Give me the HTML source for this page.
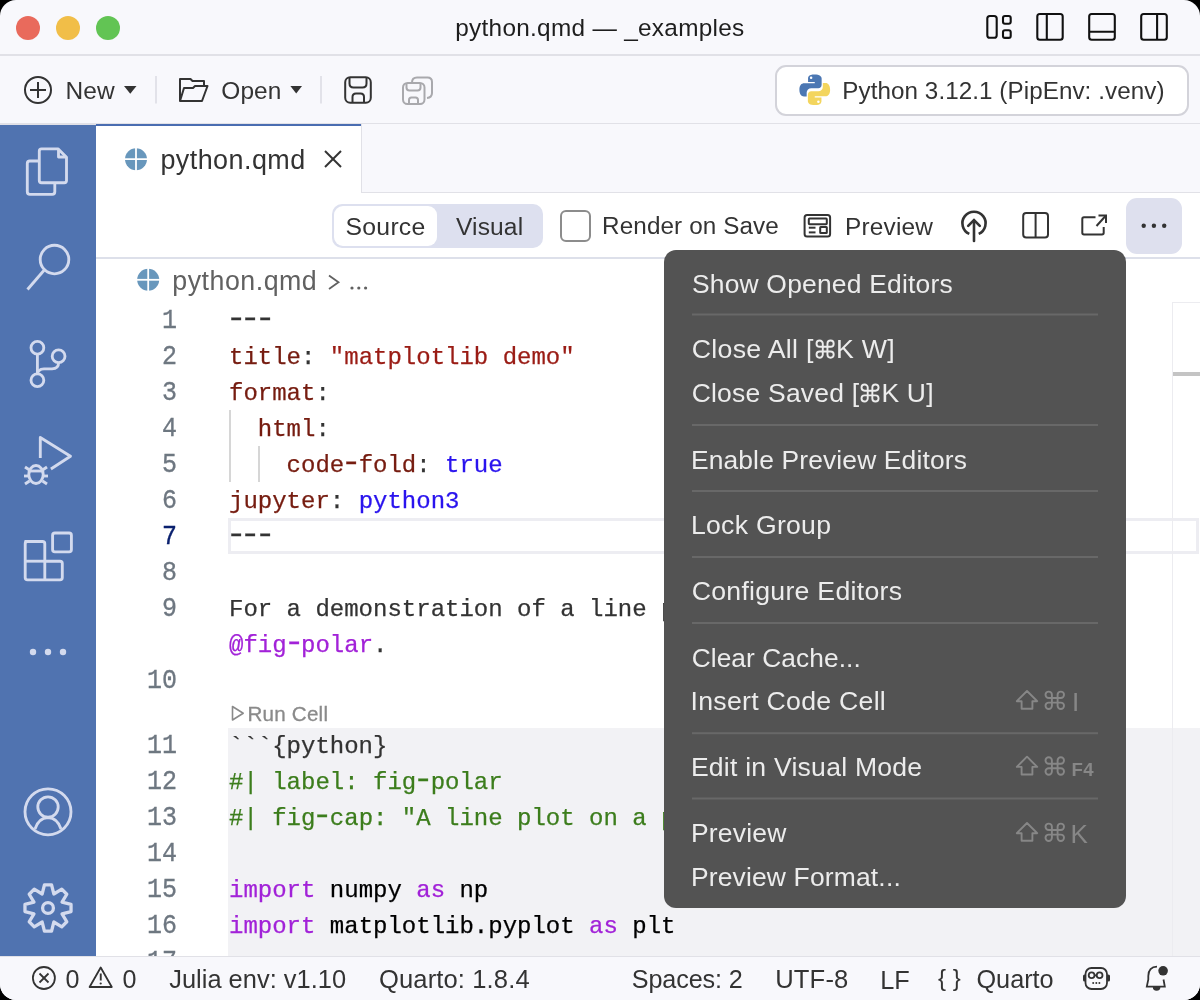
<!DOCTYPE html>
<html><head><meta charset="utf-8">
<style>
*{box-sizing:border-box;margin:0;padding:0}
html,body{width:1200px;height:1000px;overflow:hidden;background:#000}
body{font-family:"Liberation Sans",sans-serif;color:#333}
#win{will-change:transform;position:absolute;left:0;top:0;width:1200px;height:1000px;border-radius:16px;overflow:hidden;background:#f8f8fc}
.abs{position:absolute}
.t{position:absolute;white-space:pre;line-height:1}
svg{position:absolute;overflow:visible}
.code{font-family:"Liberation Mono",monospace;font-size:24px;line-height:36px;white-space:pre;position:absolute;transform:translateY(1.5px);-webkit-text-stroke:0.25px currentColor}
.ln{position:absolute;font-family:"Liberation Mono",monospace;font-size:25px;line-height:36px;color:#6e7781;text-align:right;width:60px;left:117px;transform:translateY(1px) scaleY(1.09);-webkit-text-stroke:0.3px currentColor}
.mi{position:absolute;left:28px;font-size:26px;color:#ececec;white-space:pre;line-height:1}
.sep{position:absolute;left:28px;width:406px;height:2px;background:#686868}
.hy{font-style:normal;display:inline-block;transform:translateY(-1.8px) scale(1.45,1.25)}
.sc{position:absolute;font-size:24px;color:#8c8c8c;white-space:pre;line-height:1}
</style></head>
<body>
<div id="win">
  <!-- ============ backgrounds ============ -->
  <div class="abs" style="left:0;top:54px;width:1200px;height:1.5px;background:#e1e1e7"></div>
  <div class="abs" style="left:0;top:123px;width:1200px;height:1.5px;background:#e1e1e7"></div>
  <div class="abs" style="left:0;top:124.5px;width:96px;height:831px;background:#5073b0"></div>
  <div class="abs" style="left:96px;top:124.5px;width:1104px;height:831px;background:#fff"></div>
  <div class="abs" style="left:361px;top:124px;width:839px;height:69px;background:#f8f8fc;border-left:1.5px solid #e1e1e7;border-bottom:1.5px solid #e1e1e7"></div>
  <div class="abs" style="left:96px;top:124px;width:265px;height:2px;background:#4a6db1"></div>
  <div class="abs" style="left:96px;top:257px;width:1104px;height:1.5px;background:#dde0ea"></div>

  <!-- ============ title bar ============ -->
  <div class="abs" style="left:16px;top:16px;width:24px;height:24px;border-radius:50%;background:#e96a5c"></div>
  <div class="abs" style="left:56px;top:16px;width:24px;height:24px;border-radius:50%;background:#f1be48"></div>
  <div class="abs" style="left:96px;top:16px;width:24px;height:24px;border-radius:50%;background:#62c454"></div>
  <svg style="left:0;top:0" width="1200" height="55">
    <g fill="none" stroke="#111" stroke-width="2.1">
      <rect x="987.3" y="16" width="9.4" height="21.8" rx="2.6"/>
      <rect x="1003" y="16" width="7.7" height="7.7" rx="2"/>
      <rect x="1003" y="30.2" width="7.7" height="7.7" rx="2"/>
      <rect x="1037.3" y="14" width="25.4" height="25.8" rx="2.5"/>
      <line x1="1046.8" y1="14" x2="1046.8" y2="40"/>
      <rect x="1089.2" y="14" width="25.6" height="25.8" rx="2.5"/>
      <line x1="1089" y1="31.8" x2="1115" y2="31.8"/>
      <rect x="1141.2" y="14" width="25.6" height="25.8" rx="2.5"/>
      <line x1="1157.1" y1="14" x2="1157.1" y2="40"/>
    </g>
  </svg>

  <!-- ============ toolbar ============ -->
  <svg style="left:0;top:0" width="1200" height="124">
    <g fill="none" stroke="#333" stroke-width="2">
      <circle cx="38" cy="90" r="13"/>
      <line x1="30" y1="90" x2="46" y2="90"/>
      <line x1="38" y1="82" x2="38" y2="98"/>
      <path d="M180 101 V79 H190.5 L192.5 81 H204 V86.5" stroke-linejoin="round"/>
      <path d="M180 101 L184 88 H193 L195 86 H207.5 L202 101 Z" stroke-linejoin="round"/>
      <rect x="345.2" y="77.2" width="25.6" height="25.6" rx="5"/>
      <path d="M349.5 77.5 V83.5 Q349.5 87.5 353.5 87.5 H362.5 Q366.5 87.5 366.5 83.5 V77.5"/>
      <path d="M352.5 102.5 V97 Q352.5 93.5 356 93.5 H360.5 Q364 93.5 364 97 V102.5"/>
    </g>
    <g fill="none" stroke="#a9a9ad" stroke-width="2">
      <rect x="403" y="83" width="21.5" height="21" rx="4.5"/>
      <path d="M406.5 83.5 V87.5 Q406.5 90.5 409.5 90.5 H417.5 Q420.5 90.5 420.5 87.5 V83.5"/>
      <path d="M409 104 V100 Q409 97.5 411.5 97.5 H415.5 Q418 97.5 418 100 V104"/>
      <path d="M412 82.5 Q412 77.5 417 77.5 H427.5 Q432 77.5 432 82 V93 Q432 97.5 427 98"/>
    </g>
    <path d="M124 86 H136.5 L130.25 93.8 Z" fill="#333"/>
    <path d="M290.4 86 H302 L296.2 93.4 Z" fill="#333"/>
    <line x1="156" y1="76" x2="156" y2="103.5" stroke="#dcdce4" stroke-width="1.6"/>
    <line x1="321" y1="76" x2="321" y2="103.5" stroke="#dcdce4" stroke-width="1.6"/>
  </svg>
  <div class="abs" style="left:774.5px;top:64.5px;width:414px;height:51px;border:2px solid #d3d3da;border-radius:11px;background:#fff"></div>
  <svg style="left:798.5px;top:74px" width="31.5" height="31.5" viewBox="0 0 32 32">
    <path d="M15.6 0.4C9.8 0.4 9.2 2.9 9.2 4.6V8.2H16V9.4H5.2C2.6 9.4 0.4 11.4 0.4 15.8C0.4 20.6 2.4 22.8 5 22.8H7.8V18.8C7.8 16.4 9.8 14.4 12.4 14.4H19.6C21.6 14.4 23 12.8 23 10.8V4.6C23 2.4 21.2 0.4 15.6 0.4Z" fill="#4b77b3"/>
    <circle cx="12.3" cy="3.9" r="1.3" fill="#fff"/>
    <g transform="rotate(180 16 16)">
      <path d="M15.6 0.4C9.8 0.4 9.2 2.9 9.2 4.6V8.2H16V9.4H5.2C2.6 9.4 0.4 11.4 0.4 15.8C0.4 20.6 2.4 22.8 5 22.8H7.8V18.8C7.8 16.4 9.8 14.4 12.4 14.4H19.6C21.6 14.4 23 12.8 23 10.8V4.6C23 2.4 21.2 0.4 15.6 0.4Z" fill="#f3d55e"/>
      <circle cx="12.3" cy="3.9" r="1.3" fill="#fff"/>
    </g>
  </svg>

  <svg style="left:0;top:0" width="96" height="1000">
    <g fill="none" stroke="#d3daee" stroke-width="2.85" stroke-linejoin="round">
      <path d="M38.5 161 H29.8 Q27.3 161 27.3 163.5 V191.8 Q27.3 194.3 29.8 194.3 H52.3 Q54.8 194.3 54.8 191.8 V183"/>
      <path d="M41.5 148.8 H58 L66.5 157.3 V180.5 Q66.5 182.7 64.3 182.7 H41.5 Q39.3 182.7 39.3 180.5 V151 Q39.3 148.8 41.5 148.8 Z"/>
      <path d="M58.5 149.5 V157 H66" />
      <circle cx="54.5" cy="259.5" r="14.3"/>
      <line x1="44.3" y1="270" x2="27.5" y2="289.5"/>
      <circle cx="37.4" cy="347.8" r="6.4"/>
      <circle cx="37.4" cy="380.3" r="6.4"/>
      <circle cx="58.6" cy="356.3" r="6.4"/>
      <line x1="37.4" y1="354.2" x2="37.4" y2="373.9"/>
      <path d="M58.6 362.7 Q58.6 368.5 52 368.8 H44 Q37.6 369 37.4 374.5"/>
      <path d="M40.3 458 V437.5 L70.5 456.2 L50.9 469"/>
      <ellipse cx="36" cy="474.5" rx="7.2" ry="9"/>
      <line x1="28.8" y1="471" x2="43.2" y2="471"/>
      <line x1="24" y1="476" x2="29" y2="476"/>
      <line x1="43" y1="476" x2="48" y2="476"/>
      <line x1="25" y1="467" x2="29.5" y2="470"/>
      <line x1="47" y1="467" x2="42.5" y2="470"/>
      <line x1="25" y1="484" x2="29.5" y2="481"/>
      <line x1="47" y1="484" x2="42.5" y2="481"/>
      <path d="M25.5 541.5 H42.5 Q44.8 541.5 44.8 543.8 V561.2 H60 Q62.3 561.2 62.3 563.5 V577.5 Q62.3 579.8 60 579.8 H27.5 Q25.2 579.8 25.2 577.5 V543.8 Q25.2 541.5 27.5 541.5 Z"/>
      <line x1="25.2" y1="561.2" x2="44.8" y2="561.2"/>
      <line x1="44.8" y1="561.2" x2="44.8" y2="579.8"/>
      <rect x="52.6" y="533" width="18.8" height="18.8" rx="2.3"/>
      <circle cx="48" cy="811.8" r="23"/>
      <circle cx="48" cy="807" r="10.2"/>
      <path d="M35 829 Q38.5 818 48 817.5 Q57.5 818 61 829"/>
      <path d="M44.44 884.97 L51.56 884.97 L53.82 893.96 L61.77 889.20 L66.80 894.23 L62.04 902.18 L71.03 904.44 L71.03 911.56 L62.04 913.82 L66.80 921.77 L61.77 926.80 L53.82 922.04 L51.56 931.03 L44.44 931.03 L42.18 922.04 L34.23 926.80 L29.20 921.77 L33.96 913.82 L24.97 911.56 L24.97 904.44 L33.96 902.18 L29.20 894.23 L34.23 889.20 L42.18 893.96Z" stroke-width="3.3"/>
      <circle cx="48" cy="908" r="5.4" stroke-width="3.3"/>
    </g>
    <g fill="#d3daee">
      
      <circle cx="33" cy="652" r="3.2"/>
      <circle cx="48" cy="652" r="3.2"/>
      <circle cx="63" cy="652" r="3.2"/>
    </g>
  </svg>
  <svg style="left:0;top:0" width="1200" height="300">
    <g>
      <circle cx="136" cy="159.2" r="11" fill="#6897bc"/>
      <line x1="136" y1="147" x2="136" y2="171.5" stroke="#fff" stroke-width="1.8"/>
      <line x1="124" y1="159.2" x2="148.5" y2="159.2" stroke="#fff" stroke-width="1.8"/>
      <circle cx="148.2" cy="279.8" r="11" fill="#6897bc"/>
      <line x1="148.2" y1="267.5" x2="148.2" y2="292" stroke="#fff" stroke-width="1.8"/>
      <line x1="136" y1="279.8" x2="160.5" y2="279.8" stroke="#fff" stroke-width="1.8"/>
    </g>
    <g fill="none" stroke="#333" stroke-width="2">
      <line x1="325" y1="151" x2="341" y2="167"/>
      <line x1="341" y1="151" x2="325" y2="167"/>
    </g>
    <path d="M329 275.5 L338.5 282.3 L329 289" fill="none" stroke="#616161" stroke-width="1.8"/>
    <g fill="#616161"><circle cx="352" cy="288" r="1.6"/><circle cx="358.8" cy="288" r="1.6"/><circle cx="365.6" cy="288" r="1.6"/></g>
    <!-- editor toolbar icons -->
    <g fill="none" stroke="#333" stroke-width="2">
      <rect x="804.6" y="214.9" width="25.5" height="21.6" rx="2.5"/>
      <rect x="808.8" y="218.6" width="18" height="5.6" rx="0.8"/>
      <line x1="808.8" y1="227.7" x2="815.5" y2="227.7"/>
      <line x1="808.8" y1="232.4" x2="815.5" y2="232.4"/>
      <rect x="820.2" y="227" width="6.6" height="6" rx="0.5"/>
      <path d="M969.3 233.9 A11.6 11.6 0 1 1 978.7 233.9" stroke-width="2.6"/>
      <line x1="974" y1="220.5" x2="974" y2="241" stroke-width="2.6" stroke-linecap="round"/>
      <path d="M968.2 225.8 L974 220 L979.8 225.8" stroke-width="2.6" stroke-linecap="round"/>
      <rect x="1023.2" y="213" width="24.8" height="24.5" rx="3"/>
      <line x1="1035.6" y1="213" x2="1035.6" y2="237.5"/>
      <path d="M1095.5 217.3 H1084 Q1082.3 217.3 1082.3 219 V232.8 Q1082.3 234.5 1084 234.5 H1102 Q1103.7 234.5 1103.7 232.8 V227"/>
      <line x1="1096.5" y1="226" x2="1105.5" y2="216"/>
      <path d="M1098.5 215.5 H1106 V223"/>
    </g>
    <g fill="#333"><circle cx="1143.7" cy="225.8" r="2.2"/><circle cx="1153.9" cy="225.8" r="2.2"/><circle cx="1164.2" cy="225.8" r="2.2"/></g>
  </svg>
  <div class="abs" style="left:332.4px;top:204px;width:210.6px;height:43.5px;border-radius:10px;background:#dde0ef"></div>
  <div class="abs" style="left:334px;top:206px;width:103px;height:40px;border-radius:9px;background:#fff"></div>
  <div class="abs" style="left:559.5px;top:210px;width:31.5px;height:32px;border-radius:6px;border:2px solid #8c8c8c;background:#fff"></div>
  <div class="abs" style="left:1126.2px;top:198px;width:55.5px;height:55.7px;border-radius:11px;background:#dee0ee"></div>
  <svg style="left:0;top:0" width="1200" height="260">
    <g fill="#333"><circle cx="1143.7" cy="225.8" r="2.2"/><circle cx="1153.9" cy="225.8" r="2.2"/><circle cx="1164.2" cy="225.8" r="2.2"/></g>
  </svg>
  <div class="abs" style="left:228px;top:728px;width:972px;height:228px;background:#f2f2f5"></div>
  <div class="abs" style="left:228px;top:518px;width:971px;height:36px;border:3.5px solid #ededf2"></div>
  <div class="abs" style="left:1172px;top:302px;width:28px;height:654px;border-left:1.5px solid #ececf0;border-top:1.5px solid #ececf0"></div>
  <div class="abs" style="left:1173px;top:372px;width:27px;height:4px;background:#c4c4c4"></div>
  <div class="abs" style="left:229px;top:410px;width:2px;height:72px;background:#d6d6d6"></div>
  <div class="abs" style="left:258px;top:446px;width:2px;height:36px;background:#d6d6d6"></div>
  <div class="ln" style="top:302px">1</div>
  <div class="ln" style="top:338px">2</div>
  <div class="ln" style="top:374px">3</div>
  <div class="ln" style="top:410px">4</div>
  <div class="ln" style="top:446px">5</div>
  <div class="ln" style="top:482px">6</div>
  <div class="ln" style="top:518px;color:#0b216f">7</div>
  <div class="ln" style="top:554px">8</div>
  <div class="ln" style="top:590px">9</div>
  <div class="ln" style="top:662px">10</div>
  <div class="ln" style="top:727px">11</div>
  <div class="ln" style="top:763px">12</div>
  <div class="ln" style="top:799px">13</div>
  <div class="ln" style="top:835px">14</div>
  <div class="ln" style="top:871px">15</div>
  <div class="ln" style="top:907px">16</div>
  <div class="ln" style="top:943px">17</div>
  <div class="code" style="left:229px;top:302px;color:#333"><i class="hy">-</i><i class="hy">-</i><i class="hy">-</i></div>
  <div class="code" style="left:229px;top:338px"><span style="color:#761c10">title</span><span style="color:#333">: </span><span style="color:#9a1c15">"matplotlib demo"</span></div>
  <div class="code" style="left:229px;top:374px"><span style="color:#761c10">format</span><span style="color:#333">:</span></div>
  <div class="code" style="left:229px;top:410px"><span style="color:#761c10">  html</span><span style="color:#333">:</span></div>
  <div class="code" style="left:229px;top:446px"><span style="color:#761c10">    code<i class="hy">-</i>fold</span><span style="color:#333">: </span><span style="color:#2a14ee">true</span></div>
  <div class="code" style="left:229px;top:482px"><span style="color:#761c10">jupyter</span><span style="color:#333">: </span><span style="color:#2a14ee">python3</span></div>
  <div class="code" style="left:229px;top:518px;color:#333"><i class="hy">-</i><i class="hy">-</i><i class="hy">-</i></div>
  <div class="code" style="left:229px;top:590px;color:#333">For a demonstration of a line plot on a polar axis, see</div>
  <div class="code" style="left:229px;top:626px"><span style="color:#a222d8">@fig<i class="hy">-</i>polar</span><span style="color:#333">.</span></div>
  <svg style="left:0;top:0" width="300" height="730"><path d="M232.5 706.5 V720 L243.2 713.2 Z" fill="none" stroke="#8a8a8a" stroke-width="1.6" stroke-linejoin="round"/></svg>
  <div class="code" style="left:229px;top:727px;color:#333">```{python}</div>
  <div class="code" style="left:229px;top:763px;color:#3c7d1c">#| label: fig<i class="hy">-</i>polar</div>
  <div class="code" style="left:229px;top:799px;color:#3c7d1c">#| fig<i class="hy">-</i>cap: "A line plot on a polar axis"</div>
  <div class="code" style="left:229px;top:871px"><span style="color:#a222d8">import</span><span style="color:#000"> numpy </span><span style="color:#a222d8">as</span><span style="color:#000"> np</span></div>
  <div class="code" style="left:229px;top:907px"><span style="color:#a222d8">import</span><span style="color:#000"> matplotlib.pyplot </span><span style="color:#a222d8">as</span><span style="color:#000"> plt</span></div>

  <div class="abs" style="left:0;top:955.5px;width:1200px;height:45px;background:#f8f8fc;border-top:1.5px solid #e1e1e7"></div>
  <svg style="left:0;top:0" width="1200" height="1000">
    <g fill="none" stroke="#333" stroke-width="1.8">
      <circle cx="43.9" cy="978" r="11"/>
      <line x1="39.5" y1="973.5" x2="48.5" y2="982.5"/>
      <line x1="48.5" y1="973.5" x2="39.5" y2="982.5"/>
      <path d="M100.7 967.5 L111.8 987 H89.6 Z" stroke-linejoin="round"/>
      <rect x="1085.5" y="968" width="21.5" height="21" rx="6"/>
      <circle cx="1091.6" cy="975.3" r="2.9"/>
      <circle cx="1099.6" cy="975.3" r="2.9"/>
      <line x1="1094.5" y1="975.3" x2="1096.7" y2="975.3"/>
      <path d="M1163.5 979.5 L1164.8 986.6 H1146.8 L1148.3 979.5 V976 Q1148.5 966.8 1157 966.6"/>
    </g>
    <g fill="#333">
      <rect x="99.8" y="973.5" width="1.9" height="7"/><circle cx="100.7" cy="983.5" r="1.1"/>
      <rect x="1083" y="974.5" width="3" height="7" rx="1.5"/><rect x="1107" y="974.5" width="3" height="7" rx="1.5"/>
      <circle cx="1093.2" cy="983" r="1"/><circle cx="1096.3" cy="983" r="1"/><circle cx="1099.4" cy="983" r="1"/>
      <circle cx="1163.1" cy="970.8" r="4.8"/>
      <path d="M1152.8 987 h7.6 a3.8 3.8 0 0 1 -7.6 0z"/>
    </g>
  </svg>
  <div class="t" style="left:938px;top:966px;font-size:24px;color:#333">{ }</div>
  <div class="abs" style="left:664px;top:250px;width:462px;height:658px;background:#535353;border-radius:12px"></div>
  <svg style="left:0;top:0" width="1200" height="1000"><g fill="#686868">
    <rect x="692" y="313.5" width="406" height="2"/><rect x="692" y="424" width="406" height="2"/>
    <rect x="692" y="490" width="406" height="2"/><rect x="692" y="556" width="406" height="2"/>
    <rect x="692" y="622" width="406" height="2"/><rect x="692" y="732.2" width="406" height="2"/>
    <rect x="692" y="797.5" width="406" height="2"/></g></svg>
  <svg id="shortcuts" style="left:0;top:0" width="1200" height="1000"><g fill="none" stroke="#878787" stroke-width="1.9" stroke-linejoin="round"><path d="M1027 691.0 L1037.2 701.2 H1032.4 V708.8 H1021.6 V701.2 H1016.8 Z"/><path d="M1051.9 702.6 V694.8 A3.2 3.2 0 1 0 1048.7 698 H1060.8 A3.2 3.2 0 1 0 1057.6 694.8 V705.8 A3.2 3.2 0 1 0 1060.8 702.6 H1048.7 A3.2 3.2 0 1 0 1051.9 705.8 Z"/><path d="M1027 756.7 L1037.2 766.9 H1032.4 V774.5 H1021.6 V766.9 H1016.8 Z"/><path d="M1051.9 768.3 V760.5 A3.2 3.2 0 1 0 1048.7 763.7 H1060.8 A3.2 3.2 0 1 0 1057.6 760.5 V771.5 A3.2 3.2 0 1 0 1060.8 768.3 H1048.7 A3.2 3.2 0 1 0 1051.9 771.5 Z"/><path d="M1027 823.0 L1037.2 833.2 H1032.4 V840.8 H1021.6 V833.2 H1016.8 Z"/><path d="M1051.9 834.6 V826.8 A3.2 3.2 0 1 0 1048.7 830 H1060.8 A3.2 3.2 0 1 0 1057.6 826.8 V837.8 A3.2 3.2 0 1 0 1060.8 834.6 H1048.7 A3.2 3.2 0 1 0 1051.9 837.8 Z"/></g></svg>
  <!--TEXTS-->
  <div class="t" id="title" style="left:455.2px;top:16.3px;font-size:24.36px;letter-spacing:0.29px;color:#1e1e1e">python.qmd — _examples</div>
  <div class="t" id="new" style="left:65.5px;top:79.3px;font-size:24.49px;letter-spacing:0.14px;color:#333">New</div>
  <div class="t" id="open" style="left:221.3px;top:79.3px;font-size:24.45px;letter-spacing:0.08px;color:#333">Open</div>
  <div class="t" id="py" style="left:842.3px;top:79.0px;font-size:24.21px;letter-spacing:0.07px;color:#333">Python 3.12.1 (PipEnv: .venv)</div>
  <div class="t" id="tab" style="left:160.4px;top:147.2px;font-size:26.95px;letter-spacing:0.45px;color:#333">python.qmd</div>
  <div class="t" id="src" style="left:345.6px;top:214.7px;font-size:24.75px;letter-spacing:0.25px;color:#333">Source</div>
  <div class="t" id="vis" style="left:456.0px;top:214.8px;font-size:24.58px;letter-spacing:0.12px;color:#333">Visual</div>
  <div class="t" id="ros" style="left:602.1px;top:214.3px;font-size:24.26px;letter-spacing:0.11px;color:#333">Render on Save</div>
  <div class="t" id="prev" style="left:844.9px;top:214.9px;font-size:24.41px;letter-spacing:0.21px;color:#333">Preview</div>
  <div class="t" id="bc" style="left:172.3px;top:268.2px;font-size:26.78px;letter-spacing:0.51px;color:#616161">python.qmd</div>
  <div class="t" id="m1" style="left:691.9px;top:270.6px;font-size:26.45px;letter-spacing:0.2px;color:#ececec">Show Opened Editors</div>
  <div class="t" id="m2" style="left:691.7px;top:336.2px;font-size:26.69px;letter-spacing:0.3px;color:#ececec">Close All [<svg viewBox="0 0 22 22" style="position:relative;display:inline-block;width:0.833em;height:0.833em;overflow:visible"><path d="M8.7 15.3 V7.6 A3.1 3.1 0 1 0 5.6 10.7 H16.4 A3.1 3.1 0 1 0 13.3 7.6 V18.4 A3.1 3.1 0 1 0 16.4 15.3 H5.6 A3.1 3.1 0 1 0 8.7 18.4 Z" fill="none" stroke="currentColor" stroke-width="1.9"/></svg>K W]</div>
  <div class="t" id="m3" style="left:691.7px;top:380.4px;font-size:26.49px;letter-spacing:0.21px;color:#ececec">Close Saved [<svg viewBox="0 0 22 22" style="position:relative;display:inline-block;width:0.833em;height:0.833em;overflow:visible"><path d="M8.7 15.3 V7.6 A3.1 3.1 0 1 0 5.6 10.7 H16.4 A3.1 3.1 0 1 0 13.3 7.6 V18.4 A3.1 3.1 0 1 0 16.4 15.3 H5.6 A3.1 3.1 0 1 0 8.7 18.4 Z" fill="none" stroke="currentColor" stroke-width="1.9"/></svg>K U]</div>
  <div class="t" id="m4" style="left:690.9px;top:446.6px;font-size:26.4px;letter-spacing:0.15px;color:#ececec">Enable Preview Editors</div>
  <div class="t" id="m5" style="left:690.9px;top:512.4px;font-size:26.6px;letter-spacing:0.29px;color:#ececec">Lock Group</div>
  <div class="t" id="m6" style="left:691.7px;top:578.3px;font-size:26.66px;letter-spacing:0.27px;color:#ececec">Configure Editors</div>
  <div class="t" id="m7" style="left:691.7px;top:644.7px;font-size:26.28px;letter-spacing:0.09px;color:#ececec">Clear Cache...</div>
  <div class="t" id="m8" style="left:690.6px;top:688.3px;font-size:26.67px;letter-spacing:0.27px;color:#ececec">Insert Code Cell</div>
  <div class="t" id="m9" style="left:690.9px;top:754.3px;font-size:26.59px;letter-spacing:0.23px;color:#ececec">Edit in Visual Mode</div>
  <div class="t" id="m10" style="left:690.9px;top:820.4px;font-size:26.46px;letter-spacing:0.22px;color:#ececec">Preview</div>
  <div class="t" id="m11" style="left:690.9px;top:864.4px;font-size:26.45px;letter-spacing:0.17px;color:#ececec">Preview Format...</div>
  <div class="t" id="s0a" style="left:65.6px;top:966.9px;font-size:25.14px;letter-spacing:0px;color:#333">0</div>
  <div class="t" id="s0b" style="left:122.5px;top:966.9px;font-size:25.14px;letter-spacing:0px;color:#333">0</div>
  <div class="t" id="s1" style="left:169.2px;top:966.7px;font-size:25.41px;letter-spacing:0.02px;color:#333">Julia env: v1.10</div>
  <div class="t" id="s2" style="left:379.0px;top:966.6px;font-size:25.58px;letter-spacing:0.11px;color:#333">Quarto: 1.8.4</div>
  <div class="t" id="s3" style="left:631.8px;top:966.9px;font-size:25.17px;letter-spacing:-0.11px;color:#333">Spaces: 2</div>
  <div class="t" id="s4" style="left:775.2px;top:966.5px;font-size:25.59px;letter-spacing:0.16px;color:#333">UTF-8</div>
  <div class="t" id="s5" style="left:880.3px;top:967.6px;font-size:25.3px;letter-spacing:0px;color:#333">LF</div>
  <div class="t" id="s6" style="left:976.5px;top:966.8px;font-size:25.29px;letter-spacing:-0.04px;color:#333">Quarto</div>
  <div class="t" id="run" style="left:247.4px;top:703.5px;font-size:20.59px;letter-spacing:0.24px;color:#8a8a8a;-webkit-text-stroke:0.3px currentColor">Run Cell</div>
  <div class="t" id="scI" style="left:1072.0px;top:688.8px;font-size:26.09px;letter-spacing:0px;color:#878787">I</div>
  <div class="t" id="scF" style="left:1071.5px;top:761.0px;font-size:18.6px;letter-spacing:0.3px;color:#878787;font-weight:bold">F4</div>
  <div class="t" id="scK" style="left:1070.4px;top:820.7px;font-size:26.09px;letter-spacing:0px;color:#878787">K</div>
  <!--/TEXTS-->
</div>
</body></html>
